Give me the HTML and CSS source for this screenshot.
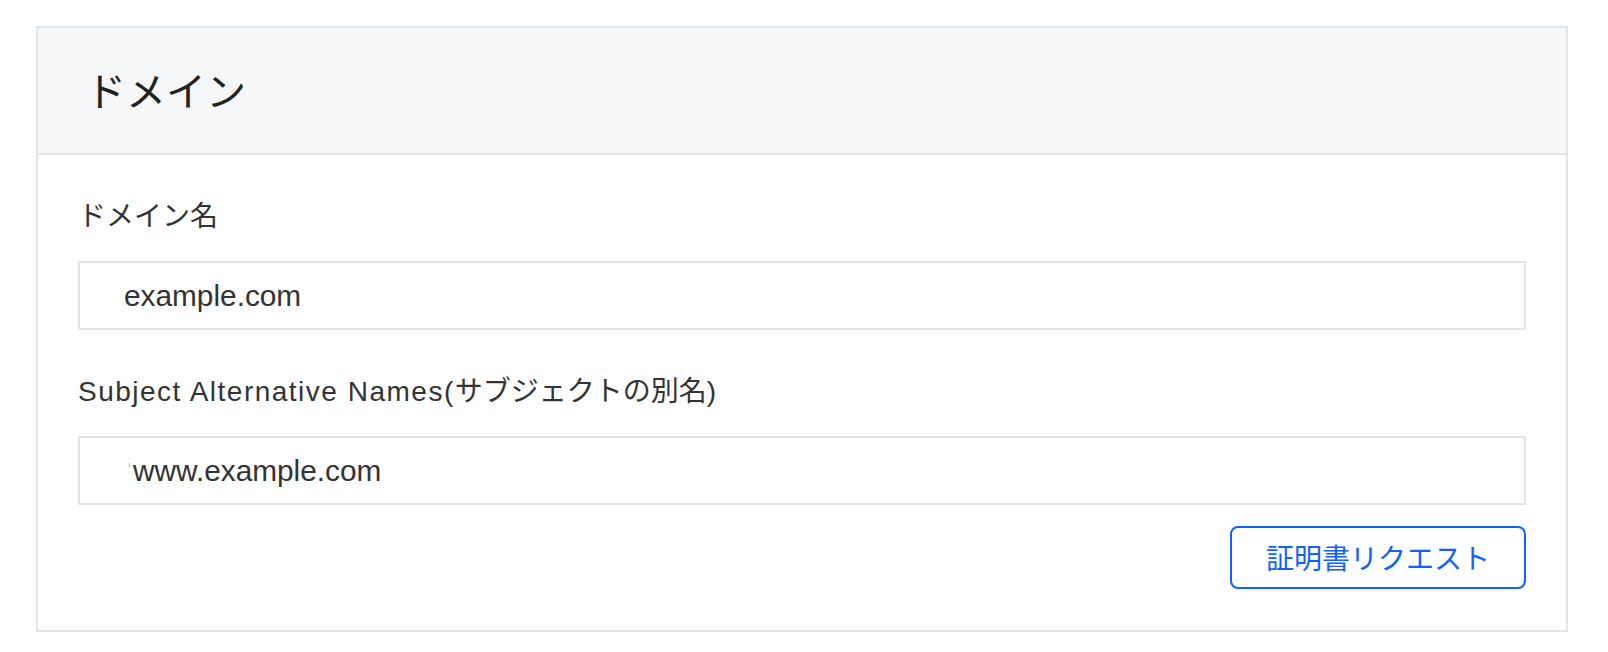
FILE: index.html
```html
<!DOCTYPE html>
<html lang="ja">
<head>
<meta charset="utf-8">
<title>ドメイン</title>
<link rel="stylesheet" href="styles.css">
</head>
<body>
<div class="page">
  <section class="card">
    <header class="card-header">
      <h2 class="card-title">ドメイン</h2>
    </header>
    <div class="card-body">
      <div class="field">
        <label class="field-label">ドメイン名</label>
        <div class="field-box">example.com</div>
      </div>
      <div class="field">
        <label class="field-label"><span class="latin">Subject Alternative Names(</span>サブジェクトの別名)</label>
        <div class="field-box field-box--tag"><span class="caret-mark"></span>www.example.com</div>
      </div>
      <div class="actions">
        <button class="btn-outline" type="button">証明書リクエスト</button>
      </div>
    </div>
  </section>
</div>
</body>
</html>
```

FILE: styles.css
```css
html, body {
  margin: 0;
  padding: 0;
  background: #ffffff;
}

body {
  font-family: "Liberation Sans", "Noto Sans CJK JP", sans-serif;
  color: #333333;
}

.page {
  padding: 26px 40px 20px 36px;
}

.card {
  border: 2px solid #dfe5e8;
  background: #ffffff;
}

.card-header {
  background: #f5f7f9;
  border-bottom: 2px solid #dfe5e8;
  padding: 33px 48px 35px;
}

.card-title {
  margin: 0;
  font-family: "Noto Sans CJK JP", sans-serif;
  font-weight: 400;
  font-size: 40px;
  line-height: 57px;
  color: #222222;
}

.card-body {
  padding: 0 40px 41px;
}

.field-label {
  display: block;
  margin-top: 42px;
  margin-bottom: 24px;
  font-size: 28px;
  line-height: 40px;
  color: #333333;
}

.latin {
  letter-spacing: 1.5px;
}

.field-box {
  height: 65px;
  border: 2px solid #dfe5e8;
  padding: 0 44px;
  display: flex;
  align-items: center;
  font-size: 29.8px;
  color: #333333;
}

.field-box--tag {
  padding-left: 49px;
}

.caret-mark {
  width: 1px;
  height: 4px;
  background: #b8b8b8;
  margin-right: 3px;
  margin-top: -12px;
}

.actions {
  display: flex;
  justify-content: flex-end;
  margin-top: 21px;
}

.btn-outline {
  font-family: "Noto Sans CJK JP", sans-serif;
  font-size: 28px;
  line-height: 59px;
  padding: 0 30px;
  height: 63px;
  width: 296px;
  border: 2px solid #0f62fe;
  border-radius: 8px;
  background: #ffffff;
  color: #0f62fe;
  cursor: pointer;
}
```
